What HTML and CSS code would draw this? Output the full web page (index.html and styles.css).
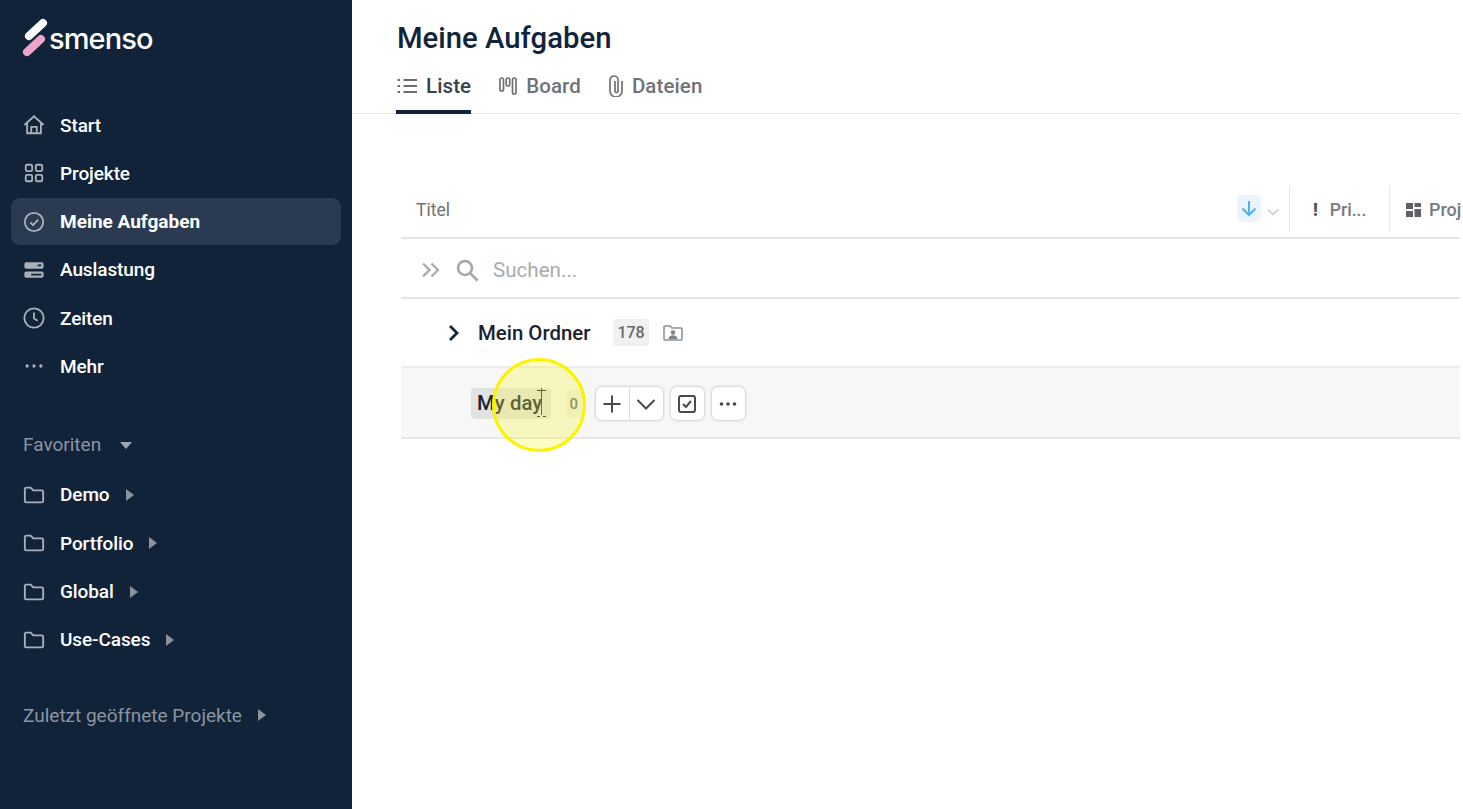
FILE: index.html
```html
<!DOCTYPE html>
<html lang="en">
  <head>
    <meta charset="UTF-8" />
    <title>Meine Aufgaben</title>
    <link rel="stylesheet" href="styles.css">
  </head>
  <body>
    <aside class="sidebar">
      <div class="logo">
        <svg class="logoMark" viewBox="0 0 26 40" width="26" height="40">
          <line x1="7" y1="18" x2="21" y2="5" stroke="#fff" stroke-width="8" stroke-linecap="round" />
          <line x1="5" y1="34" x2="19" y2="21" stroke="#eda6ca" stroke-width="8" stroke-linecap="round" />
        </svg>
        <span>smenso</span>
      </div>

      <nav class="nav">
        <a class="navItem">
          <svg class="navIcon" viewBox="0 0 24 24"><path d="M1.500 12 12 2.500 22.500 12M4.500 10v11h15V10M9 21v-7h6v7" /></svg>
          Start
        </a>
        <a class="navItem">
          <svg class="navIcon" viewBox="0 0 24 24"><rect x="3" y="3" width="7" height="7" rx="1.500" /><rect x="14" y="3" width="7" height="7" rx="1.500" /><rect x="3" y="14" width="7" height="7" rx="1.500" /><rect x="14" y="14" width="7" height="7" rx="1.500" /></svg>
          Projekte
        </a>
        <a class="navItem active">
          <svg class="navIcon" viewBox="0 0 24 24"><circle cx="12" cy="12" r="10" /><path d="m8 12.500 3 3 5.500-6" /></svg>
          Meine Aufgaben
        </a>
        <a class="navItem">
          <svg class="navIcon" viewBox="0 0 24 24"><path class="solid" d="M3.500 3.500h17a2 2 0 0 1 2 2v3a2 2 0 0 1-2 2h-17a2 2 0 0 1-2-2v-3a2 2 0 0 1 2-2Zm0 10h17a2 2 0 0 1 2 2v3a2 2 0 0 1-2 2h-17a2 2 0 0 1-2-2v-3a2 2 0 0 1 2-2Z" /><path class="cut" d="M16 7h4M9 17h11" /></svg>
          Auslastung
        </a>
        <a class="navItem">
          <svg class="navIcon" viewBox="0 0 24 24"><circle cx="12" cy="12" r="10.500" /><path d="M12 6v6.500l4 2.500" /></svg>
          Zeiten
        </a>
        <a class="navItem">
          <svg class="navIcon" viewBox="0 0 24 24"><circle class="solid" cx="4.500" cy="12" r="1.800" /><circle class="solid" cx="12" cy="12" r="1.800" /><circle class="solid" cx="19.500" cy="12" r="1.800" /></svg>
          Mehr
        </a>
      </nav>

      <div class="sectionHead favHead">Favoriten <span class="caretDown"></span></div>

      <nav class="nav">
        <a class="navItem">
          <svg class="navIcon" viewBox="0 0 24 24"><path d="M2 5.500a1.500 1.500 0 0 1 1.500-1.500h5l2.500 3h9.500a1.500 1.500 0 0 1 1.500 1.500v10a1.500 1.500 0 0 1-1.500 1.500h-17a1.500 1.500 0 0 1-1.500-1.500Z" /></svg>
          Demo <span class="caretRight"></span>
        </a>
        <a class="navItem">
          <svg class="navIcon" viewBox="0 0 24 24"><path d="M2 5.500a1.500 1.500 0 0 1 1.500-1.500h5l2.500 3h9.500a1.500 1.500 0 0 1 1.500 1.500v10a1.500 1.500 0 0 1-1.500 1.500h-17a1.500 1.500 0 0 1-1.500-1.500Z" /></svg>
          Portfolio <span class="caretRight"></span>
        </a>
        <a class="navItem">
          <svg class="navIcon" viewBox="0 0 24 24"><path d="M2 5.500a1.500 1.500 0 0 1 1.500-1.500h5l2.500 3h9.500a1.500 1.500 0 0 1 1.500 1.500v10a1.500 1.500 0 0 1-1.500 1.500h-17a1.500 1.500 0 0 1-1.500-1.500Z" /></svg>
          Global <span class="caretRight"></span>
        </a>
        <a class="navItem">
          <svg class="navIcon" viewBox="0 0 24 24"><path d="M2 5.500a1.500 1.500 0 0 1 1.500-1.500h5l2.500 3h9.500a1.500 1.500 0 0 1 1.500 1.500v10a1.500 1.500 0 0 1-1.500 1.500h-17a1.500 1.500 0 0 1-1.500-1.500Z" /></svg>
          Use-Cases <span class="caretRight"></span>
        </a>
      </nav>

      <div class="sectionHead recentHead">Zuletzt geöffnete Projekte <span class="caretRight"></span></div>
    </aside>

    <main class="main">
      <header class="topbar">
        <h1>Meine Aufgaben</h1>
        <div class="tabs">
          <a class="tab active">
            <svg class="tabIcon" viewBox="0 0 20 20" width="20" height="20"><path d="M6.500 4H20M6.500 10H20M6.500 16H20M0.500 4h2.500M0.500 10h2.500M0.500 16h2.500" /></svg>
            Liste
          </a>
          <a class="tab">
            <svg class="tabIcon" viewBox="0 0 18 18" width="18" height="18"><rect x="1" y="1" width="3.500" height="13" rx="1.700" /><rect x="7.200" y="1" width="3.500" height="8" rx="1.700" /><rect x="13.500" y="1" width="3.500" height="16" rx="1.700" /></svg>
            Board
          </a>
          <a class="tab">
            <svg class="tabIcon" viewBox="0 0 14 22" width="14" height="22"><path d="M13 6v10a6 6 0 0 1-12 0V5a4 4 0 0 1 8 0v11a1.500 1.500 0 0 1-3 0V6" /></svg>
            Dateien
          </a>
        </div>
      </header>

      <section class="table">
        <div class="tableHead">
          <span class="titleCol">Titel</span>
          <div class="sortBox">
            <span class="sortBtn">
              <svg viewBox="0 0 20 20" width="20" height="20"><path d="M10 3v14M3.500 10.500 10 17l6.500-6.500" /></svg>
            </span>
            <svg class="sortChevron" viewBox="0 0 14 14" width="14" height="14"><path d="m2 4.500 5 5 5-5" /></svg>
          </div>
          <div class="col colPrio"><span class="bang">!</span> Pri...</div>
          <div class="col colProj">
            <svg viewBox="0 0 15 14" width="15" height="14"><path d="M0 0h7v6H0ZM8.500 0H15v4H8.500ZM0 8h7v6H0ZM8.500 6H15v8H8.500Z" /></svg>
            Proj
          </div>
        </div>

        <div class="searchRow">
          <svg class="expandAll" viewBox="0 0 20 16" width="20" height="16"><path d="m2 1.500 6.500 6.500L2 14.500M10.500 1.500 17 8l-6.500 6.500" /></svg>
          <svg class="searchIcon" viewBox="0 0 24 24" width="24" height="24"><circle cx="10" cy="10" r="7" /><path d="m15.500 15.500 7 7" /></svg>
          <span>Suchen...</span>
        </div>

        <div class="folderRow">
          <svg class="folderChevron" viewBox="0 0 12 18" width="12" height="18"><path d="m2 2 7 7-7 7" /></svg>
          <span class="rowName">Mein Ordner</span>
          <span class="count">178</span>
          <svg class="personFolder" viewBox="0 0 20 18" width="20" height="18"><path class="line" d="M1 3a1 1 0 0 1 1-1h5l2 2h9a1 1 0 0 1 1 1v10a1 1 0 0 1-1 1H2a1 1 0 0 1-1-1Z" /><circle cx="10" cy="8.500" r="2.200" /><path d="M5.500 15c0-5 9-5 9 0Z" /></svg>
        </div>

        <div class="groupRow">
          <span class="rowName nameEdit">My day<span class="textCursor"></span></span>
          <span class="count zero">0</span>
          <div class="btnPair">
            <button class="rowBtn">
              <svg viewBox="0 0 20 20" width="20" height="20"><path d="M10 1.500v17M1.500 10h17" /></svg>
            </button>
            <button class="rowBtn">
              <svg viewBox="0 0 20 20" width="20" height="20"><path d="m1.500 6 8.500 8.500L18.500 6" /></svg>
            </button>
          </div>
          <button class="rowBtn single">
            <svg viewBox="0 0 20 20" width="20" height="20"><rect x="2" y="2" width="16" height="16" rx="2" /><path d="m6 10 3 3 5-6" /></svg>
          </button>
          <button class="rowBtn single">
            <svg viewBox="0 0 20 20" width="20" height="20"><circle class="solid" cx="3.500" cy="10" r="1.800" /><circle class="solid" cx="10" cy="10" r="1.800" /><circle class="solid" cx="16.500" cy="10" r="1.800" /></svg>
          </button>
          <span class="cursorHalo"></span>
        </div>
      </section>
    </main>
  </body>
</html>
```

FILE: styles.css
```css
* {
  box-sizing: border-box;
}

body {
  margin: 0;
  display: flex;
  height: 809px;
  overflow: hidden;
  background-color: #fff;
  font-family: Roboto, sans-serif;
  color: #12243a;
}

/* sidebar */

.sidebar {
  width: 352px;
  flex-shrink: 0;
  height: 100%;
  padding: 0 11px;
  background-color: #112338;
  color: #fff;
}

.logo {
  display: flex;
  align-items: center;
  height: 76px;
  margin-bottom: 25.500px;
  padding-left: 11px;
  font-family: Inter, sans-serif;
  font-size: 29px;
  font-weight: 500;
  letter-spacing: -0.9px;
}

.logoMark {
  margin-right: 1px;
}

.nav {
  display: flex;
  flex-direction: column;
  gap: 1.300px;
}

.navItem {
  display: flex;
  align-items: center;
  height: 47px;
  padding-left: 12px;
  border-radius: 9px;
  font-size: 19px;
  font-weight: 500;
  letter-spacing: -0.1px;
}

.navItem.active {
  background-color: #2a3a50;
  font-weight: 700;
  letter-spacing: 0;
}

.navIcon {
  width: 22px;
  height: 22px;
  margin-right: 15px;
  flex-shrink: 0;
  fill: none;
  stroke: #a9b0b8;
  stroke-width: 2;
}

.navIcon .solid {
  fill: #a9b0b8;
  stroke: none;
}

.navIcon .cut {
  stroke: #112338;
  stroke-width: 2;
}

.sectionHead {
  display: flex;
  align-items: center;
  padding-left: 12px;
  color: #8b95a1;
  font-size: 19px;
}

.favHead {
  margin-top: 42.500px;
  margin-bottom: 15px;
  height: 24px;
}

.recentHead {
  margin-top: 40px;
  height: 24px;
}

.caretDown {
  width: 0;
  height: 0;
  margin-left: 19px;
  margin-top: 3px;
  border-left: 6.500px solid transparent;
  border-right: 6.500px solid transparent;
  border-top: 7px solid #a0a7b0;
}

.caretRight {
  width: 0;
  height: 0;
  margin-left: 16px;
  border-top: 6px solid transparent;
  border-bottom: 6px solid transparent;
  border-left: 8px solid #8b929b;
}

/* main */

.main {
  flex: 1;
  min-width: 0;
  padding-right: 3px;
}

.topbar {
  height: 114px;
  padding: 17px 0 0 44px;
  border-bottom: 1px solid #e4e6ea;
}

h1 {
  margin: 0 0 0 1px;
  height: 42px;
  font-size: 29.300px;
  font-weight: 500;
  line-height: 42px;
}

.tabs {
  display: flex;
  gap: 28px;
}

.tab {
  display: flex;
  align-items: center;
  gap: 9px;
  height: 55px;
  padding-bottom: 1px;
  color: #6f7377;
  font-size: 20.500px;
  font-weight: 500;
  letter-spacing: 0.1px;
}

.tab.active {
  color: #3a3f47;
  border-bottom: 4px solid #12243a;
  padding: 3px 0 0 1px;
}

.tabIcon {
  fill: none;
  stroke: currentColor;
  stroke-width: 1.700;
}

.table {
  margin: 72px 0 0 49px;
}

.tableHead {
  display: flex;
  align-items: center;
  height: 53px;
  padding-left: 15px;
  padding-bottom: 4px;
  border-bottom: 2px solid #e6e6e6;
  color: #6e7074;
  font-size: 17.500px;
}

.titleCol {
  flex: 1;
}

.sortBox {
  display: flex;
  align-items: center;
  gap: 5px;
  padding-right: 9px;
  margin-bottom: 3px;
}

.sortBtn {
  display: flex;
  align-items: center;
  justify-content: center;
  width: 24px;
  height: 27px;
  border-radius: 5px;
  background-color: #e9f4fd;
}

.sortBtn svg {
  fill: none;
  stroke: #4db2f4;
  stroke-width: 2;
}

.sortChevron {
  margin-top: 7px;
  fill: none;
  stroke: #c8c8c8;
  stroke-width: 1.500;
}

.col {
  display: flex;
  align-items: center;
  height: 47px;
  border-left: 1px solid #e6e6e6;
  font-weight: 500;
  font-size: 18px;
  color: #777a7e;
  flex-shrink: 0;
}

.colPrio {
  width: 100px;
  padding-left: 23px;
  gap: 12px;
  font-size: 17.500px;
}

.bang {
  font-weight: 900;
  color: #50555a;
}

.colProj {
  width: 71px;
  padding-left: 16px;
  gap: 8px;
  white-space: nowrap;
}

.colProj svg {
  fill: #5d6166;
  flex-shrink: 0;
}

.searchRow {
  display: flex;
  align-items: center;
  height: 60px;
  padding-left: 20px;
  padding-top: 3px;
  border-bottom: 2px solid #e6e6e6;
  color: #a9abad;
  font-size: 20.600px;
}

.expandAll {
  fill: none;
  stroke: #a9abad;
  stroke-width: 2.400;
  margin-right: 14px;
}

.searchIcon {
  fill: none;
  stroke: #a4a6a8;
  stroke-width: 2.600;
  margin-right: 14px;
}

.folderRow,
.groupRow {
  position: relative;
  display: flex;
  align-items: center;
}

.folderRow {
  height: 69px;
  padding-left: 47px;
  border-bottom: 2px solid #ececec;
}

.folderChevron {
  fill: none;
  stroke: #12243a;
  stroke-width: 2.800;
  margin-right: 18px;
}

.rowName {
  color: #1a2230;
  font-size: 20.400px;
  font-weight: 500;
}

.count {
  display: flex;
  align-items: center;
  justify-content: center;
  height: 27px;
  margin-left: 23px;
  padding: 0 4px;
  border-radius: 4px;
  background-color: #f0f0f0;
  color: #666a6e;
  font-size: 16px;
  font-weight: 500;
}

.personFolder {
  margin-left: 14px;
  fill: #7d8287;
}

.personFolder .line {
  fill: none;
  stroke: #8b8f94;
  stroke-width: 1.500;
}

.groupRow {
  height: 71px;
  padding: 2px 0 0 70px;
  background-color: #f7f7f7;
  border-bottom: 2px solid #e6e6e6;
}

.nameEdit {
  position: relative;
  height: 31px;
  line-height: 31px;
  padding: 0 8.500px 0 6px;
  border-radius: 4px;
  background-color: #e2e2e2;
}

.textCursor {
  position: absolute;
  left: 66px;
  top: 2px;
  width: 9px;
  height: 27px;
  border-top: 1px solid #222;
  border-bottom: 1px dashed #222;
}

.textCursor::after {
  content: "";
  position: absolute;
  left: 4px;
  top: -3px;
  width: 1px;
  height: 27px;
  background-color: #333;
}

.count.zero {
  width: 16px;
  height: 28px;
  margin-left: 15px;
  padding: 0;
  background-color: #f0f0ea;
  font-size: 15px;
}

.btnPair {
  display: flex;
  margin-left: 14px;
  border-radius: 6px;
  background-color: #fff;
  box-shadow: 0 0 3px rgba(0, 0, 0, 0.3);
}

.rowBtn {
  display: flex;
  align-items: center;
  justify-content: center;
  width: 33.500px;
  height: 33px;
  padding: 0;
  border: 0;
  background: none;
}

.rowBtn + .rowBtn {
  border-left: 1px solid #dcdcdc;
}

.rowBtn svg {
  fill: none;
  stroke: #464b51;
  stroke-width: 2;
}

.rowBtn svg .solid {
  fill: #464b51;
  stroke: none;
}

.rowBtn.single {
  width: 33px;
  margin-left: 8px;
  border-radius: 6px;
  background-color: #fff;
  box-shadow: 0 0 3px rgba(0, 0, 0, 0.3);
}

.rowBtn.single + .rowBtn.single {
  border-left: 0;
}

/* yellow mouse highlight of the recording */
.cursorHalo {
  position: absolute;
  left: 91px;
  top: -10px;
  width: 94px;
  height: 94px;
  border: 3px solid #fbf400;
  border-radius: 50%;
  background-color: rgba(250, 245, 60, 0.3);
}
```
